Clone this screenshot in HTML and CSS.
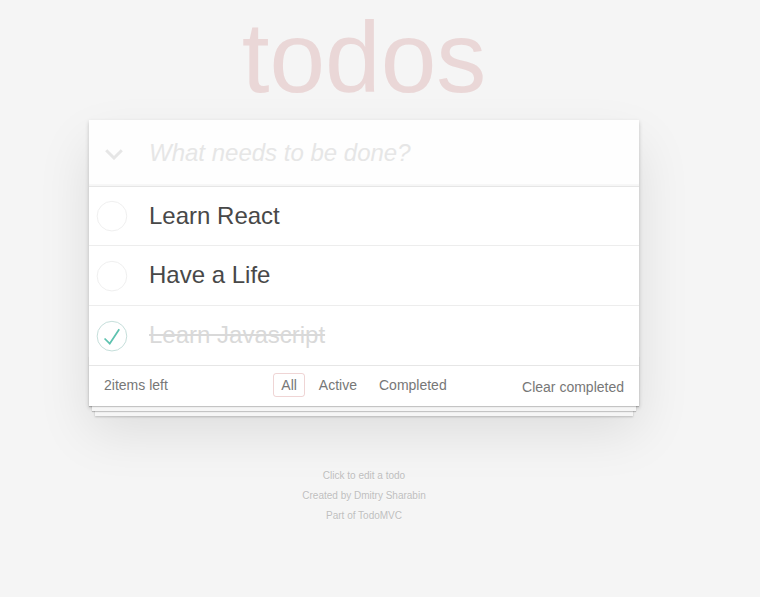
FILE: index.html
```html
<!DOCTYPE html>
<html lang="en">
<head>
<meta charset="utf-8">
<title>React • TodoMVC</title>
<link rel="stylesheet" href="styles.css">
</head>
<body>
<div class="page">
  <h1 class="title">todos</h1>
  <section class="todoapp">
    <header class="header">
      <span class="toggle-all">
        <svg width="18" height="11" viewBox="0 0 18 11"><polyline points="1.2,1.2 9,9 16.8,1.2" fill="none" stroke="#e6e6e6" stroke-width="3"/></svg>
      </span>
      <input class="new-todo" placeholder="What needs to be done?">
    </header>
    <section class="main">
      <ul class="todo-list">
        <li class="todo">
          <span class="toggle">
            <svg width="40" height="40" viewBox="-10 -18 100 135"><circle cx="50" cy="50" r="50" fill="none" stroke="#ededed" stroke-width="3"/></svg>
          </span>
          <label class="todo-label">Learn React</label>
        </li>
        <li class="todo">
          <span class="toggle">
            <svg width="40" height="40" viewBox="-10 -18 100 135"><circle cx="50" cy="50" r="50" fill="none" stroke="#ededed" stroke-width="3"/></svg>
          </span>
          <label class="todo-label">Have a Life</label>
        </li>
        <li class="todo completed">
          <span class="toggle">
            <svg width="40" height="40" viewBox="-10 -18 100 135"><circle cx="50" cy="50" r="50" fill="none" stroke="#bddad5" stroke-width="3"/><path fill="#5dc2af" d="M72 25L42 71 27 56l-4 4 20 20 34-52z"/></svg>
          </span>
          <label class="todo-label">Learn Javascript</label>
        </li>
      </ul>
    </section>
    <footer class="footer">
      <span class="todo-count"><strong>2</strong>items left</span>
      <ul class="filters"><li><a class="filter selected" href="#/">All</a></li><li><a class="filter" href="#/active">Active</a></li><li><a class="filter" href="#/completed">Completed</a></li></ul>
      <button class="clear-completed">Clear completed</button>
    </footer>
  </section>
  <footer class="info">
    <p>Click to edit a todo</p>
    <p>Created by <a href="#">Dmitry Sharabin</a></p>
    <p>Part of <a href="#">TodoMVC</a></p>
  </footer>
</div>
</body>
</html>
```
FILE: styles.css
```css
html, body {
  margin: 0;
  padding: 0;
}

body {
  padding-right: 32px;
  background: #f5f5f5;
  color: #4d4d4d;
  font: 14px "Liberation Sans", Arial, sans-serif;
  line-height: 1.4em;
  font-weight: 300;
}

.page {
  width: 550px;
  margin: 0 auto;
  padding-top: 7px;
}

.title {
  margin: 0 0 13px;
  font-size: 100px;
  line-height: 100px;
  font-weight: 100;
  text-align: center;
  color: rgba(175, 47, 47, 0.15);
}

.todoapp {
  background: #fff;
  margin: 0 0 40px;
  position: relative;
  box-shadow: 0 2px 4px 0 rgba(0, 0, 0, 0.2), 0 25px 50px 0 rgba(0, 0, 0, 0.1);
}

.header {
  display: flex;
  align-items: center;
  padding: 16px 16px 16px 0;
  background: rgba(0, 0, 0, 0.003);
  box-shadow: inset 0 -2px 1px rgba(0, 0, 0, 0.03);
}

.toggle-all {
  width: 60px;
  flex: none;
  display: flex;
  padding-top: 3px;
}

.toggle-all svg {
  margin-left: 16px;
}

.new-todo {
  flex: 1;
  margin: 0;
  padding: 0;
  border: none;
  outline: none;
  background: transparent;
  font-family: inherit;
  font-size: 24px;
  line-height: 1.4em;
  height: 33.6px;
  color: inherit;
}

.new-todo::placeholder {
  font-style: italic;
  font-weight: 300;
  color: #e6e6e6;
}

.main {
  border-top: 1px solid #e6e6e6;
}

.todo-list {
  margin: 0;
  padding: 0;
  list-style: none;
}

.todo {
  display: flex;
  align-items: center;
  font-size: 24px;
  border-bottom: 1px solid #ededed;
}

.todo:last-child {
  border-bottom: none;
}

.toggle {
  width: 60px;
  flex: none;
  display: flex;
}

.todo-label {
  display: block;
  padding: 15px 15px 15px 0;
  line-height: 1.2;
  font-weight: 400;
  color: #484848;
}

.completed .todo-label {
  color: #d9d9d9;
  text-decoration: line-through;
}

.footer {
  position: relative;
  display: grid;
  grid-template-columns: 1fr auto 1fr;
  align-items: center;
  height: 20px;
  padding: 10px 15px;
  border-top: 1px solid #e6e6e6;
  color: #777;
  text-align: center;
}

.footer::before {
  content: '';
  position: absolute;
  right: 0;
  bottom: 0;
  left: 0;
  height: 50px;
  overflow: hidden;
  box-shadow: 0 1px 1px rgba(0, 0, 0, 0.2),
              0 8px 0 -3px #f6f6f6,
              0 9px 1px -3px rgba(0, 0, 0, 0.2),
              0 16px 0 -6px #f6f6f6,
              0 17px 2px -6px rgba(0, 0, 0, 0.2);
  pointer-events: none;
}

.todo-count {
  justify-self: start;
  text-align: left;
  position: relative;
}

.todo-count strong {
  font-weight: 300;
}

.filters {
  margin: 0;
  padding: 0;
  list-style: none;
  position: relative;
}

.filters li {
  display: inline;
}

.filter {
  color: inherit;
  margin: 3px;
  padding: 3px 7px;
  text-decoration: none;
  border: 1px solid transparent;
  border-radius: 3px;
}

.filter.selected {
  border-color: rgba(175, 47, 47, 0.2);
}

.clear-completed {
  justify-self: end;
  position: relative;
  top: 1px;
  margin: 0;
  padding: 0;
  border: none;
  background: none;
  font: inherit;
  font-size: 14px;
  line-height: 20px;
  color: inherit;
  cursor: pointer;
}

.info {
  margin: 65px auto 0;
  color: #bfbfbf;
  font-size: 10px;
  text-shadow: 0 1px 0 rgba(255, 255, 255, 0.5);
  text-align: center;
}

.info p {
  line-height: 1;
  margin: 10px 0;
}

.info a {
  color: inherit;
  text-decoration: none;
}
```
